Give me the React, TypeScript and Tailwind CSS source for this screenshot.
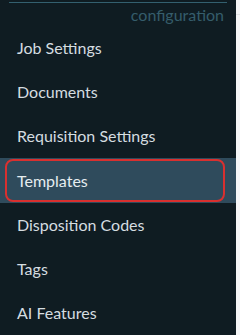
const items = [
  "Job Settings",
  "Documents",
  "Requisition Settings",
  "Templates",
  "Disposition Codes",
  "Tags",
  "AI Features",
];

export default function App() {
  return (
    <div className="flex h-[335px] w-[240px] overflow-hidden bg-[#f5f6f7] font-['Lato',sans-serif]">
      <div className="flex w-[236px] shrink-0 flex-col bg-[#0f1c22]">
        <div className="mx-[9px] mt-[2px] h-[1px] bg-[#33606f]" />
        <div className="pr-[12px] pt-[3px] text-right text-[16px] leading-[18px] text-[#355d6b]">
          configuration
        </div>
        <div className="mt-[2px] flex flex-col">
          {items.map((it) =>
            it === "Templates" ? (
              <div key={it} className="flex h-[45px] items-center bg-[#2f4b5c] px-[5px]">
                <div className="flex h-[43px] w-[220px] items-center rounded-[8px] border-2 border-[#d9302f] pl-[10px] text-[16px] text-[#e6edf0]">
                  {it}
                </div>
              </div>
            ) : (
              <div key={it} className="flex h-[44px] items-center pl-[17px] text-[16px] text-[#d5dde0]">
                {it}
              </div>
            )
          )}
        </div>
      </div>
      <div className="mt-[14px] flex-1 border-t border-[#e2e4e6]" />
    </div>
  );
}
